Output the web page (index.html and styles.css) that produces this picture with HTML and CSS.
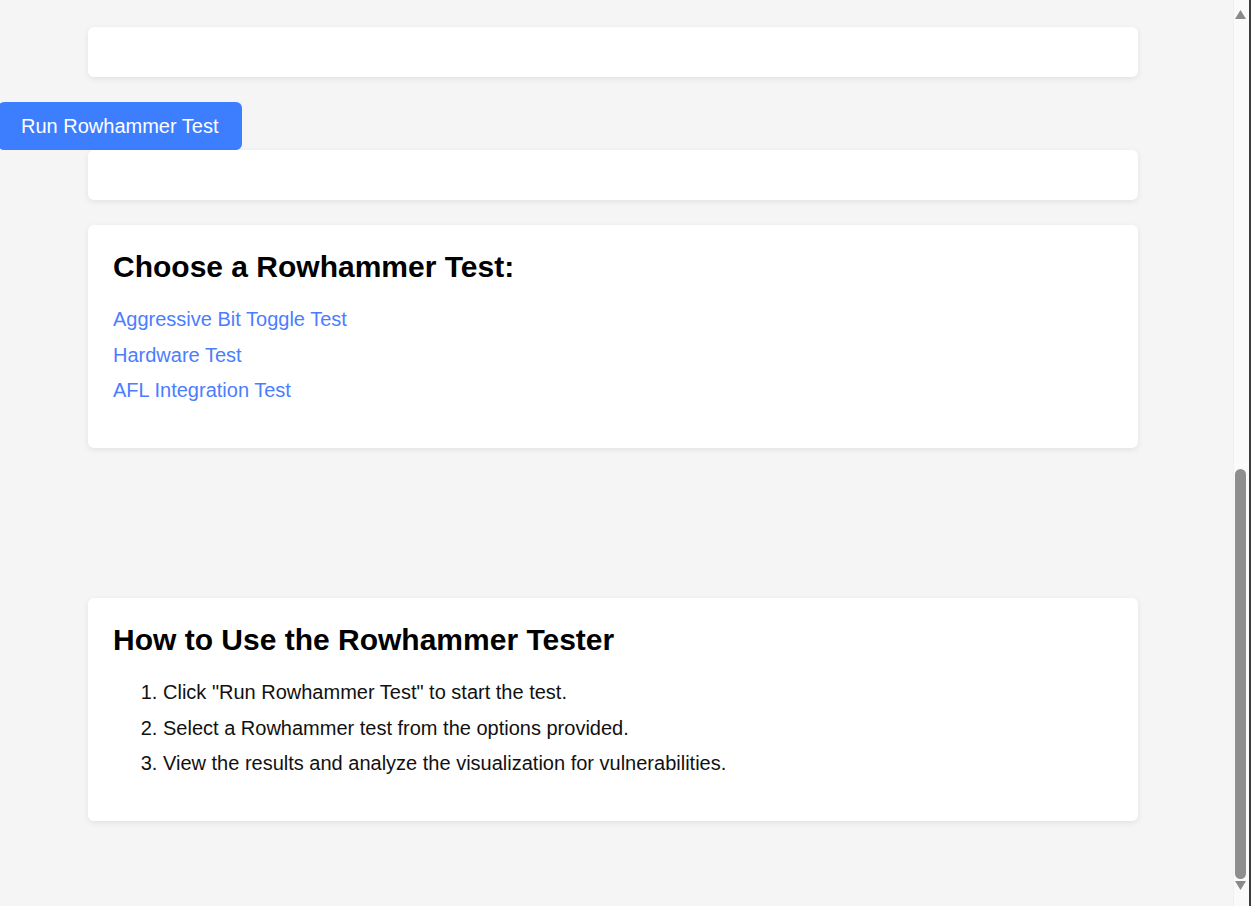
FILE: index.html
```html
<!DOCTYPE html>
<html lang="en">
<head>
<meta charset="utf-8">
<title>Rowhammer Tester</title>
<link rel="stylesheet" href="styles.css">
</head>
<body>
  <main class="page">
    <section class="card card-empty"></section>
    <button class="run-btn" type="button">Run Rowhammer Test</button>
    <section class="card card-empty"></section>
    <section class="card">
      <h2 class="card-title">Choose a Rowhammer Test:</h2>
      <ul class="test-list">
        <li><a href="#" class="test-link">Aggressive Bit Toggle Test</a></li>
        <li><a href="#" class="test-link">Hardware Test</a></li>
        <li><a href="#" class="test-link">AFL Integration Test</a></li>
      </ul>
    </section>
    <div class="visualization"></div>
    <section class="card">
      <h2 class="card-title">How to Use the Rowhammer Tester</h2>
      <ol class="steps">
        <li>Click "Run Rowhammer Test" to start the test.</li>
        <li>Select a Rowhammer test from the options provided.</li>
        <li>View the results and analyze the visualization for vulnerabilities.</li>
      </ol>
    </section>
  </main>
  <div class="scrollbar" aria-hidden="true">
    <svg class="sb-arrow sb-up" width="11" height="9" viewBox="0 0 11 9"><path d="M5.5 0 L11 9 L0 9 Z" fill="#8a8a8a"/></svg>
    <div class="sb-track"><div class="sb-thumb"></div></div>
    <svg class="sb-arrow sb-down" width="11" height="9" viewBox="0 0 11 9"><path d="M0 0 L11 0 L5.5 9 Z" fill="#8a8a8a"/></svg>
  </div>
</body>
</html>
```

FILE: styles.css
```css
html {
  background: #f5f5f5;
}

body {
  margin: 0;
  background: #f5f5f5;
  font-family: "Liberation Sans", Arial, sans-serif;
  font-size: 20px;
  color: #111;
}

.page {
  display: flex;
  flex-direction: column;
  align-items: flex-start;
  padding: 27px 0 60px;
}

.card {
  box-sizing: border-box;
  width: 1050px;
  margin: 0 0 25px 88px;
  padding: 25px;
  background: #fff;
  border-radius: 6px;
  box-shadow: 0 2px 6px rgba(0, 0, 0, 0.08);
}

.card-empty {
  height: 50px;
}

.run-btn {
  margin: 0 0 0 -2px;
  padding: 12px 24px 12px 23px;
  border: none;
  border-radius: 6px;
  background: #3d7eff;
  color: #fff;
  font-family: "Liberation Sans", Arial, sans-serif;
  font-size: 20px;
  line-height: 24px;
  cursor: pointer;
}

.card-title {
  margin: 0 0 18px;
  font-size: 30px;
  line-height: 34px;
  font-weight: bold;
  color: #000;
}

.test-list {
  list-style: none;
  margin: 0 0 14.5px;
  padding: 0;
}

.test-list li,
.steps li {
  line-height: 35.5px;
}

.test-link {
  color: #4a7dff;
  text-decoration: none;
}

.steps {
  margin: 0 0 14.5px;
  padding: 0 0 0 50px;
}

.visualization {
  height: 125px;
}

/* browser scrollbar as it appears in the capture */
.scrollbar {
  position: fixed;
  top: 0;
  right: 0;
  box-sizing: border-box;
  width: 18px;
  height: 100%;
  display: flex;
  flex-direction: column;
  align-items: flex-start;
  padding: 10px 0 16px 1px;
  background: #fafafa;
  border-right: 2px solid #3c3c3c;
  border-left: 1px solid #f0f0f0;
}

.sb-arrow {
  display: block;
  flex: none;
}

.sb-track {
  flex: 1;
  width: 11px;
  display: flex;
  flex-direction: column;
  justify-content: flex-end;
  padding: 4px 0 2px;
}

.sb-thumb {
  height: 410px;
  border-radius: 6px;
  background: #8e8e8e;
}
```
